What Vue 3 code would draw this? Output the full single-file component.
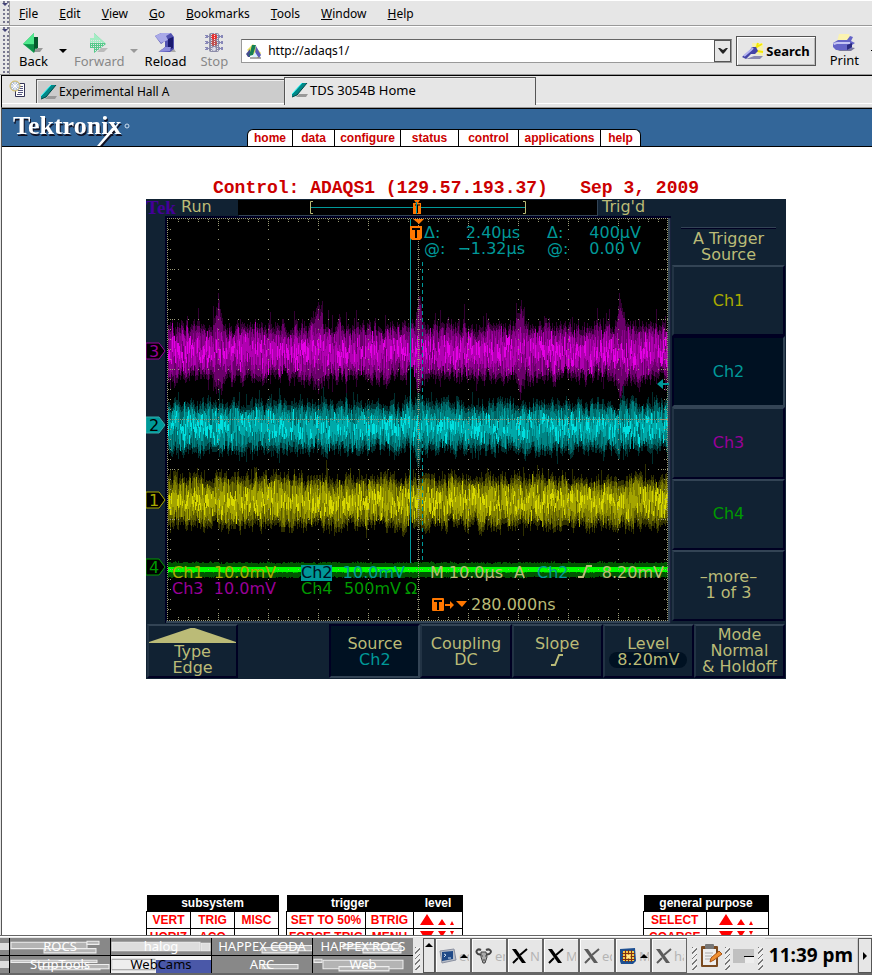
<template>
  <div class="window">
    <nav class="menubar" aria-label="Menu">
      <span class="grip"></span>
      <button v-for="m in menus" :key="m" class="menu"><u>{{ m[0] }}</u>{{ m.slice(1) }}</button>
    </nav>

    <div class="toolbar">
      <span class="grip"></span>
      <button class="tool back">
        <svg width="24" height="22" viewBox="0 0 24 22">
          <path d="M12 20l3-4h7l-3 4z" fill="#999" />
          <path d="M2 12L13 1v4h3v12h-2l-1 4z" fill="#12a050" />
          <path d="M2 12L13 1v11z" fill="#4ee88c" />
          <path d="M5 13h8v7z" fill="#0c8f48" />
          <path d="M13 12V5l4 0v11l-3 0-1 5z" fill="#04582c" />
        </svg>
        Back
      </button>
      <span class="drop"></span>
      <button class="tool forward" disabled>
        <svg width="24" height="22" viewBox="0 0 24 22">
          <path d="M10 20l4-4h7l-4 4z" fill="#bbb" />
          <path d="M3 6h4V1l12 11L7 21v-5H3z" fill="#56c98b" />
          <path d="M3 6h4V1l11 10H3z" fill="#a4ecc4" />
          <path d="M4 8h10M4 10h12M4 12h14M4 14h12M8 16h6M8 18h4" stroke="#e6e6e6" stroke-dasharray="1 1" shape-rendering="crispEdges" />
        </svg>
        Forward
      </button>
      <span class="drop off"></span>
      <button class="tool reload">
        <svg width="24" height="22" viewBox="0 0 24 22">
          <path d="M4 20l4-3h12l2 3z" fill="#aaa" />
          <path d="M1 4l6-3h10l3 4v12l-4 3H5l6-5V9l-4 3z" fill="#5252b0" />
          <path d="M1 4l6-3h10l-5 3 2 4-7 3z" fill="#a9a9e8" />
          <path d="M14 7l5-2v11l-5 2z" fill="#18186e" />
          <path d="M5 20l6-5h6l-1 4z" fill="#8c8cdc" />
        </svg>
        Reload
      </button>
      <button class="tool stop" disabled>
        <svg width="24" height="22" viewBox="0 0 24 22">
          <path d="M3 3h4v3H3zM3 9h4v3H3zM3 15h4v3H3zM17 3h4v3h-4zM17 9h4v3h-4zM17 15h4v3h-4z" fill="#8888b8" />
          <rect x="7" y="1" width="10" height="19" rx="2" fill="#8c8ca8" />
          <circle cx="12" cy="5" r="3" fill="#e83030" />
          <circle cx="12" cy="11" r="3" fill="#c05050" />
          <circle cx="12" cy="17" r="2" fill="#d8d8e8" />
          <path d="M3.500 2v18M6.500 1v18M9.500 2v18M12.500 1v18M15.500 2v18M18.500 1v18" stroke="#e6e6e6" stroke-dasharray="1 1" shape-rendering="crispEdges" />
        </svg>
        Stop
      </button>
      <div class="url">
        <svg width="18" height="18" viewBox="0 0 18 18">
          <path d="M2 8l6-6 8 9-3 5z" fill="#e8e060" />
          <path d="M1 12l4-5v8l-2 0z" fill="#444c90" />
          <path d="M4 14l3-11h4l-3 10z" fill="#158055" />
          <path d="M11 4l5 9-2 3-4-5z" fill="#5b5bb8" />
          <path d="M7 15l3-5 3 5z" fill="#d8f0ff" />
          <path d="M5 16h11" stroke="#555" />
        </svg>
        <input v-model="address" aria-label="Address" />
        <button class="url-drop" aria-label="Address history">
          <svg width="10" height="7" viewBox="0 0 10 7"><path d="M0 1l2 0 3 2 3-2h2L7 5 5 7 3 5z" fill="#222" /></svg>
        </button>
      </div>
      <button class="search">
        <svg width="22" height="18" viewBox="0 0 22 18">
          <path d="M10 1h11v13l-10-3z" fill="#f8f2a8" />
          <path d="M13 6l7-4M15 9l6 1M15 4l1-3" stroke="#f4e800" stroke-width="2" />
          <path d="M4 17h14l3-3h-9z" fill="#8888b0" />
          <path d="M0 15l8-7 2-3 4 0 2 4-3 3-4 0-5 5z" fill="#4444a8" />
          <path d="M2 14l7-6 2-2" stroke="#b4b4f0" stroke-width="2" fill="none" />
        </svg>
        Search
      </button>
      <button class="tool print">
        <svg width="24" height="20" viewBox="0 0 24 20">
          <path d="M5 9l2-8h10l2 7z" fill="#fbf3b0" />
          <path d="M5 18h14l4-3-6-1z" fill="#77779c" />
          <path d="M1 10l5-3 9 0 3-4 3 1-2 4 4 2-3 2v3l-6 2H4l-3-3z" fill="#6464c8" />
          <path d="M1 10l4-1h13v2H5l-3 1z" fill="#c4c4f4" />
          <path d="M15 12l5-2v4l-5 3z" fill="#2a2a80" />
        </svg>
        Print
      </button>
      <span class="edge-tick"></span>
    </div>

    <div class="tabs">
      <button class="newtab" aria-label="New tab">
        <svg width="18" height="18" viewBox="0 0 18 18">
          <path d="M6.500 3.500h9v13h-9z" fill="#fff" stroke="#333355" />
          <path d="M9 6.500h5M9 8.500h5M9 10.500h5M9 12.500h5M8 14.500h5" stroke="#555580" shape-rendering="crispEdges" />
          <circle cx="6" cy="6" r="5" fill="#b4c0d4" stroke="#d8c060" />
          <path d="M6 2v8M2 6h8M3 3l6 6M9 3L3 9" stroke="#fff" />
        </svg>
      </button>
      <button v-for="(t, i) in tabs" :key="t" :class="['tab', { active: i === 1 }]">
        <svg width="18" height="18" viewBox="0 0 18 18">
          <path d="M5 16l3-3h9l-2 3z" fill="#999" />
          <path d="M1 13L11 2h5L6 14l-5 2z" fill="#008888" />
          <path d="M1 13L11 2" stroke="#3ff" />
          <path d="M16 2L6 14l-5 2" stroke="#044" fill="none" />
        </svg>
        {{ t }}
      </button>
    </div>

    <main class="page">
      <header class="banner">
        <svg class="logo" width="130" height="37" viewBox="0 0 130 37" role="img" aria-label="Tektronix">
          <g class="logo-word" fill="#fff">
            <text x="11" y="25">Tektronix</text>
            <path d="M95 37l15-18h4L98 37z" />
          </g>
          <circle cx="125" cy="17" r="2" fill="none" stroke="#cde" />
        </svg>
        <nav class="site-nav">
          <a v-for="l in links" :key="l" href="#">{{ l }}</a>
        </nav>
      </header>

      <h1>Control: ADAQS1 (129.57.193.37)&nbsp;&nbsp; Sep 3, 2009</h1>

      <section class="scope">
        <svg class="screen" viewBox="0 0 525 424" role="img" aria-label="Oscilloscope display">
          <text class="tek" x="0" y="15">Tek</text>
          <text x="35" y="13" class="sand">Run</text>
          <rect x="93" y="1" width="359" height="16" fill="#334455" />
          <rect x="92" y="1" width="359" height="15" fill="#000" />
          <path d="M167 2.500h-2.500v12h2.500M377 2.500h2.500v12h-2.500" stroke="#bbbb77" fill="none" />
          <path d="M165 8.500h214" stroke="#009999" />
          <path d="M268 1h6l-2 3h3v11h-8V4h3z" fill="#ff7700" />
          <path d="M269 6h5M271.500 6v8" stroke="#000" />
          <path d="M270.500 3v12" stroke="#009999" />
          <text x="456" y="13" class="sand">Trig'd</text>

          <rect x="19" y="17" width="506" height="407" fill="#000022" />
          <path d="M523 19v404H20" stroke="#334455" stroke-width="3" fill="none" />
          <rect x="21" y="19" width="501" height="403" fill="#000" />

          <g fill="none" shape-rendering="crispEdges">
            <g v-for="t in traces" :key="t.name">
              <path v-for="(l, i) in t.layers" :key="i" :d="l.d" :stroke="l.color" />
            </g>
            <path :d="grid.rows" stroke="#999977" stroke-dasharray="1 9" />
            <path :d="grid.edges" stroke="#999977" stroke-dasharray="1 1" />
            <path :d="grid.ticks" stroke="#999977" stroke-dasharray="1 1" />
            <path d="M264.500 20V364" stroke="#009999" />
            <path d="M276.500 63V364" stroke="#009999" stroke-dasharray="4 3" />
          </g>

          <path d="M267 20h11l-5 5z" fill="#ff7700" />
          <path d="M264 27h12v12l-2 2h-8l-2-2z" fill="#ff7700" />
          <path d="M266 29h8v2h-3v8h-2v-8h-3z" fill="#000" />
          <path d="M511 185l6-5v4h6v2h-6v4z" fill="#009999" />

          <g v-for="m in markers" :key="m.n">
            <path :d="`M0 ${m.y - 8}h13l6 8-6 8H0z`" :fill="m.fill" :stroke="m.color" />
            <text x="3" :y="m.y + 6" :fill="m.ink">{{ m.n }}</text>
          </g>

          <g fill="#009999">
            <text x="278" y="39">Δ:</text>
            <text x="374" y="39" text-anchor="end">2.40µs</text>
            <text x="401" y="39">Δ:</text>
            <text x="495" y="39" text-anchor="end">400µV</text>
            <text x="278" y="55">@:</text>
            <text x="379" y="55" text-anchor="end">−1.32µs</text>
            <text x="401" y="55">@:</text>
            <text x="495" y="55" text-anchor="end">0.00 V</text>
          </g>

          <text x="26" y="379" fill="#aaaa00">Ch1</text>
          <text x="130" y="379" text-anchor="end" fill="#aaaa00">10.0mV</text>
          <text x="26" y="395" fill="#990099">Ch3</text>
          <text x="130" y="395" text-anchor="end" fill="#990099">10.0mV</text>
          <rect x="155" y="366" width="31" height="16" fill="#009999" />
          <text x="155" y="379" fill="#001122">Ch2</text>
          <text x="259" y="379" text-anchor="end" fill="#009999">10.0mV</text>
          <text x="155" y="395" fill="#009900">Ch4</text>
          <text x="255" y="395" text-anchor="end" fill="#009900">500mV</text>
          <text x="259" y="395" fill="#009900">Ω</text>
          <g class="sand">
            <text x="284" y="379">M</text>
            <text x="357" y="379" text-anchor="end">10.0µs</text>
            <text x="368" y="379">A</text>
            <text x="391" y="379" fill="#009999">Ch2</text>
            <path d="M432 378h5l4-11h5" stroke="#bbbb77" stroke-width="2" fill="none" />
            <text x="518" y="379" text-anchor="end">8.20mV</text>
            <text x="325" y="411">280.000ns</text>
          </g>
          <rect x="286" y="399" width="12" height="13" rx="1" fill="#ff7700" />
          <path d="M288 401h8v2h-3v8h-2v-8h-3z" fill="#000" />
          <path d="M299 405h5v-3l4 4-4 4v-3h-5zM310 402h11l-5 6z" fill="#ff7700" />
        </svg>

        <div class="side">
          <div class="side-head">A Trigger<br />Source</div>
          <button
            v-for="s in sources"
            :key="s.label"
            :class="['key', { on: s.on }]"
            :style="{ color: s.color }"
          >{{ s.label }}</button>
        </div>

        <div class="bottom">
          <button class="key type">
            <svg width="88" height="15" viewBox="0 0 88 15"><path d="M0 15v-1L42 0h4l42 14v1z" fill="#bbbb77" /></svg>
            Type<br />Edge
          </button>
          <span></span>
          <button class="key on">Source<br /><span class="teal">Ch2</span></button>
          <button class="key">Coupling<br />DC</button>
          <button class="key slope">
            Slope
            <svg width="16" height="16" viewBox="0 0 16 16" aria-label="rising edge">
              <path d="M2 13h4l4-10h4" stroke="#bbbb77" stroke-width="2" fill="none" />
            </svg>
          </button>
          <button class="key">Level<br /><span class="pill">8.20mV</span></button>
          <button class="key mode">Mode<br />Normal<br />&amp; Holdoff</button>
        </div>
      </section>

      <div class="panels">
        <table class="panel">
          <thead><tr><th colspan="3">subsystem</th></tr></thead>
          <tbody>
            <tr><td>VERT</td><td>TRIG</td><td>MISC</td></tr>
            <tr><td>HORIZ</td><td>ACQ</td><td></td></tr>
          </tbody>
        </table>
        <table class="panel wide">
          <colgroup><col class="c-set" /><col class="c-trig" /><col /></colgroup>
          <thead><tr><th colspan="2">trigger</th><th>level</th></tr></thead>
          <tbody>
            <tr><td>SET TO 50%</td><td>BTRIG</td><td><svg width="36" height="14" viewBox="0 0 36 14"><path :d="steps" /></svg></td></tr>
            <tr><td>FORCE TRIG</td><td>MENU</td><td><svg width="36" height="14" viewBox="0 0 36 14"><path :d="stepsDown" /></svg></td></tr>
          </tbody>
        </table>
        <table class="panel general">
          <thead><tr><th colspan="2">general purpose</th></tr></thead>
          <tbody>
            <tr><td>SELECT</td><td><svg width="36" height="14" viewBox="0 0 36 14"><path :d="steps" /></svg></td></tr>
            <tr><td>COARSE</td><td><svg width="36" height="14" viewBox="0 0 36 14"><path :d="stepsDown" /></svg></td></tr>
          </tbody>
        </table>
      </div>
    </main>

    <footer class="taskbar">
      <div class="pager">
        <span class="desk sliver"></span>
        <button v-for="d in desks.slice(0, 4)" :key="d.name" class="desk">
          <svg viewBox="0 0 100 16" preserveAspectRatio="none"><path v-for="(r, i) in d.wins" :key="i" :d="r" /></svg>
          <span>{{ d.name }}</span>
        </button>
        <span class="desk sliver"></span>
        <button v-for="d in desks.slice(4)" :key="d.name" :class="['desk', { current: d.current }]">
          <svg viewBox="0 0 100 16" preserveAspectRatio="none"><path v-for="(r, i) in d.wins" :key="i" :d="r" /></svg>
          <span>{{ d.name }}</span>
        </button>
      </div>
      <span class="hatch"></span>
      <button class="hide" aria-label="Hide panel"><i class="up"></i></button>
      <button v-for="(t, i) in tasks" :key="i" class="task">
        <svg v-if="t.icon === 'term'" width="18" height="18" viewBox="0 0 18 18">
          <path d="M1 4l14-2 2 11-14 3z" fill="#b8bec8" stroke="#8a90a0" />
          <path d="M3 5l11-1 0 8-11 2z" fill="#204a87" />
          <path d="M5 7l2 1-2 2M9 11h3" stroke="#cde" fill="none" />
        </svg>
        <svg v-else-if="t.icon === 'gnu'" width="18" height="18" viewBox="0 0 18 18" fill="none" stroke="#444">
          <path d="M6 3C2 1 0 5 3 7l4 1M11 3c4-2 7 2 3 4l-4 1" stroke-width="2" />
          <path d="M6 5l5 0 1 5-2 6H8l-2-6z" fill="#aaa" />
          <path d="M7 9h1M10 9h1M8 13h2" />
        </svg>
        <svg v-else-if="t.icon === 'grid'" width="18" height="18" viewBox="0 0 18 18">
          <path d="M1 2l15-1 1 13-3 3H2l-1-3z" fill="#1d4f91" />
          <path d="M4 4h11v10H4z" fill="#f7c948" />
          <path d="M3 6.500h13M3 9.500h13M3 12.500h13M6.500 3v12M9.500 3v12M12.500 3v12" stroke="#803010" shape-rendering="crispEdges" />
          <circle cx="9.500" cy="9.500" r="2" fill="#ffe890" />
        </svg>
        <svg v-else width="17" height="18" viewBox="0 0 17 18" :class="{ faded: t.faded }">
          <path d="M1 2h4l10 14h-4z" fill="#000" />
          <path d="M16 2L9 8M7 11l-5 5" stroke="#000" stroke-width="2" />
        </svg>
        <span>{{ t.label }}</span>
        <i v-if="t.group" class="up"></i>
      </button>
      <span class="hatch"></span>
      <svg class="clip" width="26" height="26" viewBox="0 0 26 26">
        <rect x="2" y="3" width="17" height="21" rx="1" fill="#7a4a20" />
        <rect x="4" y="6" width="13" height="16" fill="#eee" />
        <rect x="6" y="1" width="9" height="5" rx="1" fill="#777" />
        <path d="M6 10h8M6 13h7M6 16h5" stroke="#aaa" />
        <path d="M11 19l1-4 8-7 3 3-8 6z" fill="#f09030" stroke="#a85010" />
      </svg>
      <span class="hatch"></span>
      <span class="mini"></span>
      <span class="hatch"></span>
      <time class="clock">11:39 pm</time>
      <button class="more" aria-label="Hide panel"><i></i></button>
    </footer>
  </div>
</template>

<script setup>
import { ref } from 'vue'

const address = ref('http://adaqs1/')
const menus = ['File', 'Edit', 'View', 'Go', 'Bookmarks', 'Tools', 'Window', 'Help']
const tabs = ['Experimental Hall A', 'TDS 3054B Home']
const links = ['home', 'data', 'configure', 'status', 'control', 'applications', 'help']

const sources = [
  { label: 'Ch1', color: '#aaaa00' },
  { label: 'Ch2', color: '#009999', on: true },
  { label: 'Ch3', color: '#990099' },
  { label: 'Ch4', color: '#009900' },
  { label: '–more–\n1 of 3', color: '#bbbb77' },
]

const markers = [
  { n: 3, y: 152, color: '#990099', fill: '#000', ink: '#990099' },
  { n: 2, y: 226, color: '#33aaaa', fill: '#009999', ink: '#000' },
  { n: 1, y: 301, color: '#aaaa00', fill: '#000', ink: '#aaaa00' },
  { n: 4, y: 368, color: '#009900', fill: '#000', ink: '#009900' },
]

const steps = 'M7 1l7 11H0zM22 6l4 6h-8zM32 8l2 4h-4z'
const stepsDown = 'M7 12L0 1h14zM22 7l-4-6h8zM32 5l-2-4h4z'

const desks = [
  { name: 'ROCS', wins: ['M1 4h76v6H1z', 'M34 10h52v4H34z', 'M77 3h12v3H77z'] },
  { name: 'halog', wins: ['M1 4h88v8H1z', 'M90 5h9v7h-9z'] },
  { name: 'HAPPEX CODA', wins: ['M60 7h40v5H60z', 'M50 9h36v5H50z'] },
  { name: "HAPPEX'ROCS", wins: ['M50 8h38v6H50z', 'M30 6h56v4H30z'] },
  { name: 'StripTools', wins: ['M1 4h86v2H1z', 'M30 10h60v3H30z', 'M76 8h23v4H76z'] },
  { name: 'WebCams', current: true, wins: ['M2 3h96v10H2z'] },
  { name: 'ARC', wins: ['M50 8h36v4H50z'] },
  { name: 'Web', wins: ['M1 3h8v3H1z', 'M10 4h80v8H10z', 'M26 10h50v4H26z'] },
]

const tasks = [
  { icon: 'term', label: 'ed', group: true },
  { icon: 'gnu', label: 'em' },
  { icon: 'x', label: 'No' },
  { icon: 'x', label: 'MI' },
  { icon: 'x', label: 'ed', faded: true },
  { icon: 'grid', label: 'M', group: true },
  { icon: 'x', label: 'ha', faded: true },
]

// repeatable noise so the traces look the same on every load
function noise(seed) {
  let s = seed
  return () => {
    s = (s * 1664525 + 1013904223) % 4294967296
    return s / 4294967296
  }
}

// each layer is one vertical bar per column, dim and tall first, bright and short last
function trace(name, mid, amp, colors, seed, spikes = []) {
  const rnd = noise(seed)
  const gauss = () => (rnd() + rnd() + rnd() - 1.5) / 1.5
  const paths = colors.map(() => '')
  let drift = 0
  let reachUp = 0.8
  let reachDown = 0.8
  for (let x = 0; x < 500; x++) {
    let up = 0
    let down = 0
    for (const [at, h, w] of spikes) {
      const k = Math.max(0, 1 - Math.abs(x - at) / w)
      up += h * k * (0.4 + rnd() * 0.6)
      down += h * 0.8 * k * (0.4 + rnd() * 0.6)
    }
    drift = drift * 0.5 + gauss() * amp * 0.2
    reachUp = reachUp * 0.4 + (0.4 + rnd() * 0.6) * 0.6
    reachDown = reachDown * 0.4 + (0.4 + rnd() * 0.6) * 0.6
    const top = mid + drift - amp * reachUp * 1.1
    const bottom = mid + drift + amp * reachDown * 1.1
    const tall = rnd() > 0.9 ? amp * 0.5 * rnd() : 0
    const bars = [
      [top - 5 - tall - up * 1.2, bottom + 5 + tall * rnd() + down * 1.2],
      [top - up, bottom + down],
      [top + amp * 0.35 * rnd(), bottom - amp * 0.35 * rnd()],
    ]
    for (let i = 3; i < colors.length; i++) {
      const c = mid + gauss() * amp * 0.7
      const half = amp * (i === 3 ? 0.32 : 0.18) * (0.5 + rnd())
      bars.push([c - half, c + half])
    }
    bars.forEach(([a, b], i) => {
      if (i === 2 && rnd() > 0.75) return
      if (i === 4 && rnd() > 0.6) return
      paths[i] += `M${x + 22}.5 ${Math.round(a)}V${Math.round(b)}`
    })
  }
  return { name, layers: colors.map((color, i) => ({ color, d: paths[i] })) }
}

const traces = [
  trace('ch3', 153, 28, ['#330033', '#6a006a', '#8c008c', '#b000b0', '#e400e4'], 7,
    [[50, 26, 7], [150, 26, 5], [251, 26, 6], [352, 22, 6], [452, 28, 6]]),
  trace('ch2', 228, 25, ['#003030', '#006464', '#008484', '#00a8a8', '#00e0e0'], 21, [[250, 20, 4]]),
  trace('ch1', 303, 26, ['#303000', '#5c5c00', '#808000', '#a4a400', '#d8d800'], 99),
  trace('ch4', 371, 3, ['#005500', '#009900', '#00cc00', '#00ff00', '#00ff00'], 5),
]
traces[3].layers.push({ color: '#00ff00', d: 'M22 368.5H522M22 369.5H522M22 370.5H522M22 371.5H522M22 372.5H522' })

const grid = { rows: '', edges: '', ticks: '' }
for (let i = 1; i < 8; i++) grid.rows += `M22 ${20 + i * 50}.5H522`
for (let i = 1; i < 10; i++) grid.rows += `M${22 + i * 50}.5 20V421`
grid.edges = 'M21.5 19V421M521.5 19V421M21 19.5H522M21 421.5H522M272.5 20V421M22 220.5H522'
for (let i = 1; i < 50; i++) {
  const x = 22 + i * 10
  const n = i % 5 ? 3 : 7
  grid.ticks += `M${x}.5 20v${n}M${x}.5 ${421 - n}v${n}M${x}.5 ${221 - (n >> 1)}v${n}`
}
for (let i = 1; i < 40; i++) {
  const y = 20 + i * 10
  const n = i % 5 ? 4 : 7
  grid.ticks += `M22 ${y}.5h${n}M${522 - n} ${y}.5h${n}M${273 - (n >> 1)} ${y}.5h${n}`
}
</script>

<style>
body {
  background: #fff;
}
</style>

<style scoped>
.window {
  display: flex;
  flex-direction: column;
  height: 100vh;
  overflow: hidden;
  background: #e6e6e6;
  font-family: "Noto Sans", sans-serif;
  font-size: 12px;
  color: #000;
}
button, input {
  font: inherit;
  color: inherit;
  background: none;
  border: 0;
  padding: 0;
  margin: 0;
}
svg { display: block; flex: none }

/* menu and toolbar */
.menubar {
  display: flex;
  align-items: center;
  flex: none;
  height: 24px;
  border-top: 1px solid #fff;
  border-bottom: 1px solid #999;
  gap: 21px;
}
.grip {
  align-self: stretch;
  flex: none;
  width: 8px;
  margin-left: 1px;
  border-right: 1px solid #999;
  background: radial-gradient(circle at 1px 1px, #77778f 1px, transparent 1px) 2px 8px / 4px 4px;
  position: relative;
}
.grip::before {
  content: "";
  position: absolute;
  top: 2px;
  left: 1px;
  border: 3px solid transparent;
  border-top-color: #447;
  background: #e6e6e6;
}
.menubar .grip { margin-right: -12px }
.toolbar {
  display: flex;
  align-items: center;
  flex: none;
  height: 47px;
  border-top: 1px solid #fff;
  border-bottom: 1px solid #999;
}
.tool {
  display: flex;
  flex-direction: column;
  align-items: center;
  flex: none;
  font-size: 13px;
  line-height: 15px;
}
.tool:disabled { color: #888 }
.back { margin-left: 9px }
.forward { margin-left: 7px }
.reload { margin-left: 7px }
.stop { margin-left: 14px }
.drop {
  flex: none;
  margin-left: 11px;
  border: 4px solid transparent;
  border-top-color: #000;
  border-bottom: 0;
}
.drop.off {
  margin-left: 5px;
  border-top-color: #999;
}
.url {
  display: flex;
  align-items: center;
  flex: 1;
  min-width: 0;
  height: 22px;
  margin-left: 13px;
  border: 1px solid #999;
  border-top-color: #666;
  background: #fff;
}
.url svg { margin-left: 3px }
.url input {
  flex: 1;
  min-width: 0;
  margin-left: 5px;
  font-size: 12px;
  outline: 0;
}
.url-drop {
  display: flex;
  align-items: center;
  justify-content: center;
  align-self: stretch;
  width: 17px;
  border: 1px solid #555;
  background: #e6e6e6;
}
.url-drop svg { margin: 0 }
.search {
  display: flex;
  align-items: center;
  flex: none;
  gap: 2px;
  height: 30px;
  margin-left: 4px;
  padding: 0 5px;
  border: 1px solid #555;
  box-shadow: inset 1px 1px #fff, inset -1px -1px #bbb;
  font-size: 13px;
  font-weight: 700;
}
.print { margin-left: 14px }
.edge-tick {
  flex: none;
  width: 1px;
  height: 1px;
  margin-left: 12px;
  background: #000;
}

/* browser tabs */
.tabs {
  display: flex;
  flex: none;
  height: 31px;
  margin-left: 1px;
  border-top: 1px solid #000;
  border-left: 1px solid #000;
  border-bottom: 1px solid #999;
  background: linear-gradient(#fff, #fff) 0 27px / 100% 1px no-repeat;
}
.newtab { padding: 4px 0 9px 7px }
.tab {
  display: flex;
  align-items: center;
  flex: 0 1 249px;
  box-sizing: border-box;
  height: 24px;
  margin-top: 3px;
  padding: 0 3px;
  gap: 1px;
  border: 1px solid #555;
  border-bottom: 0;
  box-shadow: inset 1px 1px #eee;
  background: #ccc;
  white-space: nowrap;
}
.newtab + .tab { margin-left: 9px }
.tab.active {
  flex-basis: 252px;
  height: 28px;
  margin: 1px 0 0 -1px;
  padding: 0 6px 3px;
  background: #e6e6e6;
  font-size: 13px;
}

/* page */
.page {
  flex: 1;
  min-height: 0;
  overflow: hidden;
  margin-left: 1px;
  border-left: 1px solid #555;
  background: #fff;
}
.banner {
  display: flex;
  align-items: flex-end;
  height: 37px;
  border-top: 1px solid #000;
  border-bottom: 1px solid #000;
  background: #336699;
}
.logo-word {
  font: 700 26px "Liberation Serif", serif;
  filter: drop-shadow(1px 2px 0 #112);
}
.site-nav {
  display: grid;
  grid-template-columns: 44px 42px 66px 58px 60px 82px 40px;
  margin-left: 115px;
  border: 1px solid #000;
  border-bottom: 0;
  border-radius: 6px 6px 0 0;
  background: #fff;
}
.site-nav a {
  font: 700 12px/16px "Liberation Sans", sans-serif;
  color: #c00;
  text-align: center;
  text-decoration: none;
}
.site-nav a + a { border-left: 1px solid #000 }
h1 {
  margin: 31px 0 0 211px;
  font: 700 18px/20px "Liberation Mono", monospace;
  color: #c00;
}

/* oscilloscope */
.scope {
  display: grid;
  grid-template-columns: 525fr 115fr;
  max-width: 640px;
  margin: 1px 0 0 144px;
  background: #112233;
  font: 16px/16px "DejaVu Sans", sans-serif;
  color: #bbbb77;
}
.screen {
  width: 100%;
  height: auto;
}
.sand { fill: #bbbb77 }
.tek {
  font: 700 19px "Liberation Serif", serif;
  fill: #440099;
}
.side {
  display: grid;
  grid-template-rows: 66px repeat(5, 1fr);
  padding: 0 1px 2px;
}
.side-head {
  margin: 28px 9px 0;
  padding-top: 3px;
  border-top: 1px solid #334455;
  box-shadow: inset 0 1px #000022;
  text-align: center;
}
.key {
  border: 2px solid;
  border-color: #334455 #000022 #000022 #223344;
  text-align: center;
  white-space: pre-line;
}
.key.on {
  background: #001122;
  border-color: #000022 #334455 #334455 #000022;
}
.bottom {
  grid-column: 1 / 3;
  display: grid;
  grid-template-columns: repeat(7, 1fr);
  padding: 1px 1px 1px;
  height: 54px;
}
.bottom .key {
  padding-top: 1px;
  white-space: nowrap;
}
.type svg {
  width: 100%;
  margin-bottom: 1px;
}
.bottom .mode { padding: 0 }
.slope svg { margin: 0 auto }
.teal { color: #009999 }
.pill {
  display: inline-block;
  padding: 0 8px;
  border-radius: 8px;
  background: #001122;
}

/* control tables */
.panels {
  display: flex;
  align-items: flex-start;
  gap: 7px;
  margin: 216px 0 0 144px;
}
.panel {
  flex: none;
  table-layout: fixed;
  border-collapse: collapse;
  width: 133px;
  font: 700 12px/16px "Liberation Sans", sans-serif;
  color: #f00;
  text-align: center;
}
.panel.wide { width: 177px }
.c-set { width: 79px }
.c-trig { width: 48px }
.panel.general {
  width: 126px;
  margin-left: 173px;
}
.panel th {
  height: 16px;
  padding: 0;
  background: #000;
  color: #fff;
}
.panel td {
  height: 16px;
  padding: 0;
  border: 1px solid #000;
  white-space: nowrap;
}
.panel svg {
  margin: 0 auto;
  fill: #f00;
}

/* desktop panel */
.taskbar {
  display: flex;
  align-items: stretch;
  flex: none;
  height: 35px;
  border-top: 1px solid #666;
  border-bottom: 2px solid #666;
  box-shadow: inset 0 1px #fff;
  padding-top: 2px;
  background: #e6e6e6;
}
.pager {
  display: grid;
  grid-template-columns: 9px repeat(4, 100px);
  grid-template-rows: 1fr 1fr;
  gap: 1px;
  flex: none;
  background: #000;
}
.desk {
  position: relative;
  display: flex;
  align-items: center;
  justify-content: center;
  min-width: 0;
  min-height: 0;
  overflow: hidden;
  background: #888;
  color: #fff;
  font-size: 13px;
  line-height: 17px;
  white-space: nowrap;
}
.desk svg {
  position: absolute;
  inset: 0;
  width: 100%;
  height: 100%;
  fill: #b4b4b4;
  stroke: #eee;
}
.desk:nth-child(3) svg { fill: #ddd }
.desk span { position: relative }
.desk.current {
  background: linear-gradient(#f4f4f4 4px, transparent 4px), linear-gradient(90deg, #eee 45%, #4a58a8 45%);
  color: #000;
}
.desk.current svg {
  width: 45%;
  fill: #eee;
  stroke: #999;
}
.sliver { background: linear-gradient(#888 5px, #ddd 5px, #ddd 12px, #888 12px) }
.hatch {
  flex: none;
  width: 5px;
  margin: 9px 2px 3px;
  background: repeating-linear-gradient(135deg, #777 0 1px, #eee 1px 4px);
}
.hide, .more {
  display: flex;
  justify-content: center;
  flex: none;
  width: 12px;
  border: 1px solid #555;
  box-sizing: border-box;
}
.up {
  width: 0;
  height: 0;
  margin-top: 4px;
  border: 4px solid transparent;
  border-top: 0;
  border-bottom-color: #000;
}
.hide { margin-left: 1px }
.task {
  display: flex;
  align-items: center;
  flex: 0 0 36px;
  box-sizing: border-box;
  overflow: hidden;
  padding-left: 3px;
  border: 1px solid #666;
  box-shadow: inset 1px 1px #fff;
  font-size: 13px;
  color: #b4b4b4;
}
.task span {
  width: 10px;
  margin-left: 2px;
  overflow: hidden;
}
.task .up { margin: 0 0 0 -9px }
.faded { opacity: .6 }
.clip { align-self: center; margin: 0 -2px 0 0 }
.task + .hatch { margin-left: 5px }
.mini {
  flex: none;
  align-self: center;
  width: 21px;
  height: 14px;
  margin: 0 2px 0 1px;
  background: linear-gradient(#000, #000) 11px 7px / 10px 1px no-repeat, linear-gradient(#eee, #eee) 12px 8px / 9px 6px no-repeat, #c0c0c0;
}
.clock {
  flex: 1;
  text-align: center;
  font-size: 19px;
  line-height: 33px;
  font-weight: 700;
  border: 1px solid #ccc;
  border-width: 1px 1px 0 0;
  white-space: nowrap;
}
.more { width: 14px; align-items: center }
.more i {
  border: 4px solid transparent;
  border-right: 0;
  border-left-color: #000;
}
</style>
